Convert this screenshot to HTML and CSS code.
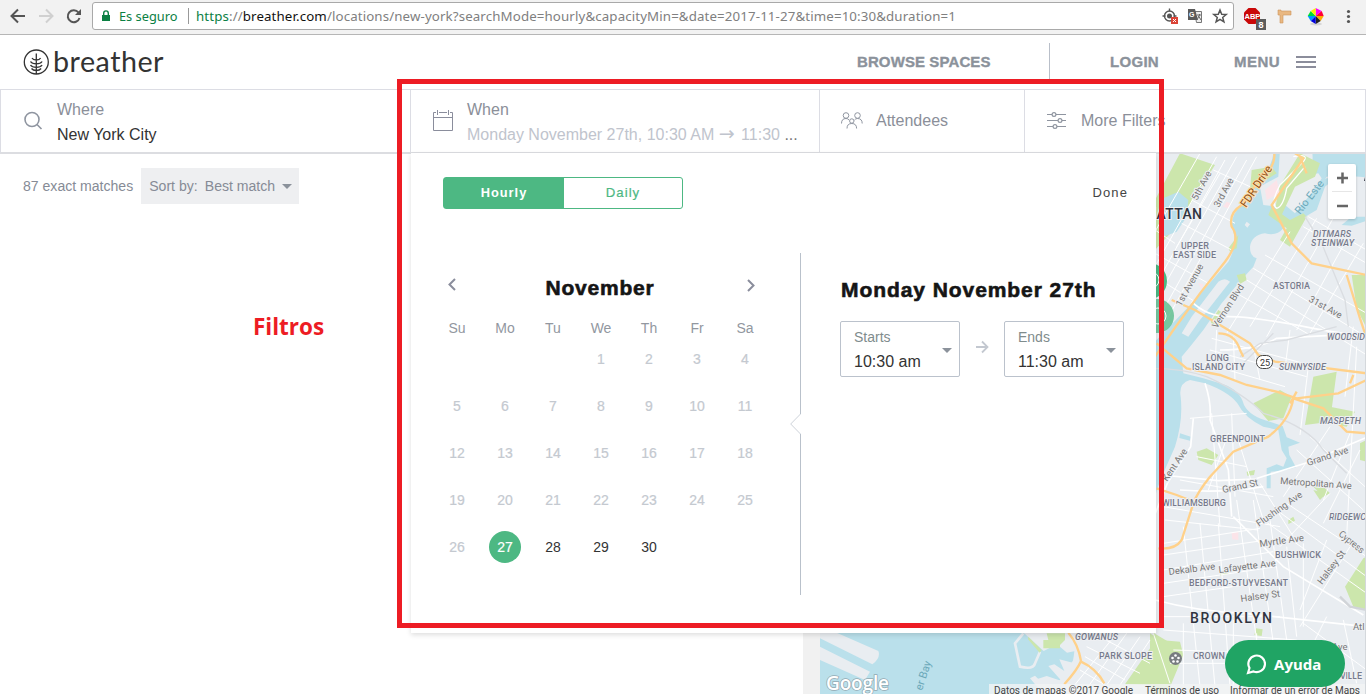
FILE: index.html
```
<!DOCTYPE html>
<html lang="en">
<head>
<meta charset="utf-8">
<title>Breather</title>
<link rel="stylesheet" href="styles.css">
</head>
<body>
<div class="browser">
  <svg class="nav" width="92" height="34" fill="none" stroke="#555" stroke-width="2">
    <path d="M25 16H12M18 9.500l-6.500 6.500 6.500 6.500"/>
    <path stroke="#d0d0d0" d="M39 16h13M46 9.500l6.500 6.500-6.500 6.500"/>
    <path d="M78.500 12.500a6 6 0 1 0 1 5.500"/><path fill="#555" stroke="none" d="M81 9v6h-6z"/>
  </svg>
  <div class="address">
    <svg width="10" height="12"><path fill="#0b8043" d="M1 5h8v6H1z"/><path fill="none" stroke="#0b8043" stroke-width="1.400" d="M2.700 5V3.200a2.300 2.300 0 0 1 4.600 0V5"/></svg>
    <span class="secure">Es seguro</span>
    <span class="url"><i>https</i>://<b>breather.com</b>/locations/new-york?searchMode=hourly&amp;capacityMin=&amp;date=2017-11-27&amp;time=10:30&amp;duration=1</span>
  </div>
  <svg class="exts" width="206" height="34">
    <g fill="none" stroke="#555" stroke-width="1.400"><circle cx="9.500" cy="16" r="5"/><path d="M9.500 8.500v3M2.500 16h3M13.500 16h3"/><circle cx="9.500" cy="16" r="1.800" fill="#555"/></g>
    <path fill="#db4437" d="M11 17h7v7h-7z"/><path stroke="#fff" d="M13 19l3 3m0-3l-3 3"/>
    <path fill="#eee" stroke="#777" d="M34.500 11.500h7v11h-5z"/><path fill="#5a5a5a" d="M28 9h7l3 11H28z"/><path fill="none" stroke="#666" d="M37 15h4M39.500 14v1l-2 4m1-3l2.500 4"/><text x="29" y="17" class="gt">G</text>
    <path fill="none" stroke="#555" stroke-width="1.500" d="M60 10l1.700 4.300 4.500.200-3.500 2.900 1.200 4.400-3.900-2.500-3.900 2.500 1.200-4.400-3.500-2.900 4.500-.200z"/>
    <path fill="#c90808" d="M88.500 8h7l4.500 4.500v7l-4.500 4.500h-7l-4.500-4.500v-7z"/><text x="84.500" y="19" class="abp">ABP</text>
    <path fill="#5c5c5c" d="M96 19h10v11H96z"/><text x="98.500" y="28" class="count">8</text>
    <path fill="#e9b882" stroke="#cf965b" stroke-width=".6" d="M118 10h3v1h10v4h-8v8h-3v-8h-2z"/>
    <ellipse cx="156" cy="24" rx="6" ry="1.500" fill="#d5d5d5"/>
    <g transform="translate(155.700 16)"><path fill="#f0f" d="M0 0V-8L6-5z"/><path fill="#f03" d="M0 0L6-5 8 0z"/><path fill="#fa0" d="M0 0H8L5 5z"/><path fill="#222" d="M0 0L5 5 0 8z"/><path fill="#00d" d="M0 0V8L-5 5z"/><path fill="#09f" d="M0 0L-5 5-8 0z"/><path fill="#0d3" d="M0 0H-8L-5-5z"/><path fill="#fe0" d="M0 0L-5-5 0-8z"/></g>
    <g fill="#555"><circle cx="188.500" cy="11.500" r="1.600"/><circle cx="188.500" cy="16.500" r="1.600"/><circle cx="188.500" cy="21.500" r="1.600"/></g>
  </svg>
</div>

<header class="header">
  <div class="logo">
    <svg width="27" height="27" fill="none" stroke="#333" stroke-width="1.300"><circle cx="13.300" cy="13" r="12"/><path d="M13.300 4.500v20.500M9 9q1 2 4.300 2 3.300 0 4.300-2M7.500 12.500q1.500 2.300 5.800 2.300t5.800-2.300M7.500 16q1.500 2.300 5.800 2.300t5.800-2.300M8.500 19.500q1.500 2 4.800 2t4.800-2"/></svg>
    <span>breather</span>
  </div>
  <nav class="menu"><a class="browse">BROWSE SPACES</a><a class="login">LOGIN</a><a class="more">MENU</a>
    <svg width="20" height="14" stroke="#8b8d9b" stroke-width="2"><path d="M0 2h20M0 7h20M0 12h20"/></svg></nav>
</header>

<section class="filters">
  <div class="cell where">
    <svg width="20" height="20" fill="none" stroke="#8f95a0" stroke-width="1.600"><circle cx="8" cy="8.500" r="7"/><path d="M13 13.500L17.500 18"/></svg>
    <div><p class="label">Where</p><p class="value">New York City</p></div>
  </div>
  <div class="cell when">
    <svg width="21" height="22" fill="none" stroke="#8a8d9c"><path d="M3 2.500H.5v18h19v-18H17M6 2.500h8M.5 7.500h19M4.500 0v5M15.500 0v5"/></svg>
    <div><p class="label">When</p><p class="picked">Monday November 27th, 10:30 AM <em>→</em> 11:30 <span>...</span></p></div>
  </div>
  <div class="cell people">
    <svg width="22" height="18" fill="none" stroke="#8f95a0"><circle cx="5" cy="3.500" r="2.800"/><circle cx="16.500" cy="3.500" r="2.800"/><circle cx="10.800" cy="9" r="2.200"/><path d="M.5 11.500q0-5 4.500-5 2 0 3 1.500M21.200 11.500q0-5-4.700-5-2 0-3 1.500M6 16.500q0-5 4.800-5t4.800 5"/></svg>
    <span class="label">Attendees</span>
  </div>
  <div class="cell extra">
    <svg width="20" height="18" fill="none" stroke="#8f95a0" stroke-width="1.200"><path d="M0 2.500h5M9 2.500h10M0 8.500h11M15 8.500h4M0 14.500h6M10 14.500h9"/><circle cx="7" cy="2.500" r="1.900"/><circle cx="13" cy="8.500" r="1.900"/><circle cx="8" cy="14.500" r="1.900"/></svg>
    <span class="label">More Filters</span>
  </div>
</section>

<main class="content">
  <section class="results"><div class="bar"><span>87 exact matches</span><div class="sort">Sort by:<span>Best match</span><i class="caret"></i></div></div><p class="note">Filtros</p></section>
  <div class="track"></div>
  <section class="map">
  <svg width="546" height="541" viewBox="820 153 546 541">
    <rect x="820" y="153" width="546" height="541" fill="#e9edf1"/>
    <g transform="translate(1150 150) scale(.33333)" fill="none">
      <!-- water -->
      <g fill="#bae0eb">
        <path d="M370 0Q372 40 335 80L275 165Q240 195 247 235 265 280 235 335L130 455 0 590V1130L20 1020 40 970 75 890Q100 810 92 740 85 700 120 690L165 700Q235 725 262 760 285 805 340 830L385 840 395 900 410 925 400 950 380 943 350 955 350 1015 362 1015 362 965 400 962 438 952 418 915 415 890 450 878 410 862 398 828 360 815Q300 800 282 765 270 720 220 703L160 685 100 670 95 620 120 590 160 540 215 460 265 400 310 350 320 325Q300 320 300 290 305 255 345 250 380 260 400 235L430 205 470 165 530 80 560 75 648 82V0H485Q500 60 440 110 400 150 385 170L340 165 330 110 385 80 390 0z"/>
        <path d="M375 160L440 215 500 180 525 110 560 80 500 90 430 190zM575 225l30-25h45v12l-45 15zM90 850l32 10-2 12-32-8z"/>
      </g>
      <path fill="#e9edf1" d="M205 395q20-15 35 0L150 510 115 560 95 550 125 500zM290 215l10 8-8 10-8-8z"/>
      <path fill="#ebeef1" d="M415 100l35-20 55-10 10 15-15 25-65 80-30-25-15-50z"/>
      <!-- parks -->
      <g fill="#cce6ac">
        <path d="M90 10L195 45 75 235 15 300V150zM305 60l60-10 15 20-80 50zM450 10l60 30-15 40-60 30-40 85-20-10 10-70z"/>
        <path d="M365 170l55 40 40-20 10 10-50 90-30-20 20-35-55-40zM235 295l30-40-5 40-20 10zM260 375l25-5 5 20-20 12zM205 480l15 10-30 40-8-15zM605 375h45v160l-30-60z"/>
        <path d="M310 760l80-40 35 20-25 65-45 8zM490 680l70-15-20 150-75 10zM540 770l75 15-25 45-55-10zM140 905l30-10 35 20-20 30-40-15zM290 965l25-5-3 15-20 2zM490 1010l20-10 30 30-20 10zM630 880l20-10v65l-20-5z"/>
        <path d="M640 1225l10-5v160l-40-10-25-60zM318 1435l20 3-3 20-22-3zM415 1110l15-10 5 12-20 10zM490 1020l40 10-20 20zM0 1450l30 20 60 5 10 40-50 120H0zM210 1265l15-5 15 10-30 7z"/>
      </g>
      <path fill="#bae0eb" d="M40 145l45-20 30 25-5 50-30 45-40 15z"/>
      <path fill="#fbe4e9" d="M345 120l35-30 10 40-40 20zM230 155l12 5-8 15-15-5zM245 1150l20-5v25l-18-2zM145 400l15 3-5 15z"/>
      <!-- street grids -->
      <g stroke="#fff" stroke-width="3">
        <path d="M150 10L15 245M200 20L15 350M225 30L20 400M260 20L30 430M290 30L40 480M320 20L50 510M15 240l60 40M95 220l150 80M125 150l130 70M190 60l110 50M15 310l160 90M15 380l120 75M210 70L80 290"/>
        <path d="M345 315L650 490M310 355l330 200M290 390l360 225M260 430l220 125M420 245L230 550M500 205L300 530M555 195L350 560M600 250L440 540M640 280L480 550M460 230l190 110M475 200l175 100"/>
        <path d="M200 540l-5 120M250 560l5 130M310 590l20 100M185 565l330 90M180 600l290 80M165 640l240 70M420 540l-15 115M475 650l-25 205M610 530l-25 210"/>
        <path d="M185 790l25 340M235 850l-60 170M245 790l10 250M120 805l170-15M140 920l150 30M90 990l280 50M265 870l75 240M620 590l-30 570M480 860l165 150M440 900l200 180M540 830L400 1040M600 850l-80 200M630 900L520 1120"/>
        <path d="M40 1070l350 60M45 1110l280 30M40 1180l290-45M40 1215l310-45M40 1260l330-55M40 1300l340-50M40 1340l380-55M100 1130l50 480M150 1120l45 490M205 1120l35 490M260 1050l60 420M310 1050l60 430M360 1110l50 360M410 1190l30 270"/>
        <path d="M40 1400h350M40 1440l400 30M70 1500l300 10M60 1540h200M100 1420v190M250 1410v200M320 1450v160M460 1180v250M530 1170l-80 210M600 1190L450 1430M410 1060l240 160M380 1080l270 200M340 1110l310 220M330 1000l100 160M540 1030L390 1190M460 1420l190 140M530 1400l-100 200M580 1410l40 190"/>
      </g>
      <g stroke="#fff" stroke-width="5"><path d="M125 455Q170 500 240 500t250 35 150 0M165 700q20 60 15 110l55 150 10 140M130 805l-8 85-70 110-40 100M35 975l170 17 110-5 160-50 175-75M250 1100l150 150 240 145M15 1350q130 35 270 40l365 40M90 1020q130 10 250-10M210 600q110 0 170-35l270-15"/><path d="M430 20q50-10 30 15L390 105q-30 55-10 70 20-5 30-60l55-65" stroke-width="4"/></g>
      <path stroke="#dadde1" stroke-width="4" d="M0 655q100 0 170 25 110 50 170 110 130 35 180 110l70 70M465 200l50 80 70 170 10 80M270 620l60-40 80-10 150-40M370 550l-90 90"/>
      <path stroke="#d1d4d8" stroke-width="7" d="M570 1340l30 30 50 10"/>
      <g stroke="#ffd18a" stroke-width="7">
        <path d="M372 0Q380 50 335 80L275 165Q235 190 245 230 275 270 225 335L150 430 70 540 15 620"/>
        <path d="M65 450l70 30 100 60 65 40 25 35 50 20 275 35M435 10l25 15-95 140 60 115 60 60 165 35M590 375l40 130 20 60"/>
        <path d="M20 580l90 75 100 20 80 30 90 20 60 20 125-15 85-40M430 745l90 30 70 70 60 5M430 745q-10 65-75 115L250 905 180 980q-40 50-50 80l-35 110q-20 30-70 25M20 1015l60 20 50 20"/>
        <path d="M205 550q50 0 65 50l10 20M600 700l10-25M440 725l-20 35M450 20l20 50"/>
      </g>
    </g>
    <g transform="translate(790 600) scale(.33333)">
      <path fill="#bae0eb" d="M90 90h770l-10 90-40 60-80 45H90z"/>
      <path fill="#e9edf1" d="M90 98h50l125 55q8 20-18 40L90 115zM90 140l150 75-15 25-135-60zM700 98h200v190H790l-50-50 30-10 45 15-40-45 18-5 30 20-15-35 40 10 8-35-25 5-30-25-40 20-55-50zM720 235l15-8 55 55h-30z"/>
      <path fill="none" stroke="#e9edf1" stroke-width="8" d="M700 100l-25 30 15 70q40 10 45-10l15-35"/>
      <path fill="#cce6ac" d="M770 100h55v20l-15 15v10h-50v-25h15zM1090 98l50 30v130l-135-5 80-115zM715 110l40 40-6 8-35-40z"/>
      <g fill="none" stroke="#fff" stroke-width="3"><path d="M1010 100L880 280M1050 110L930 285M980 100L850 260M1080 120L970 285M910 100l170 90M890 140l160 80M885 170l120 70M870 210l100 60M1090 100l50 150"/></g>
      <path fill="none" stroke="#ffd18a" stroke-width="7" d="M835 98q30 35 38 85-10 25-50 70M873 185q45 20 70 65"/>
    </g>
    <g fill="#4db883"><circle cx="1149" cy="281" r="18"/><circle cx="1157" cy="316" r="17" opacity=".75"/></g>
    <g fill="none" stroke="#fff"><circle cx="1151" cy="280" r="8"/><circle cx="1158" cy="316" r="8"/></g>
    <g class="names">
      <text class="city" x="1146" y="219" textLength="56">HATTAN</text><text class="city" x="1190" y="623" textLength="82">BROOKLYN</text>
      <text x="1181" y="249" textLength="28">UPPER</text><text x="1173" y="258" textLength="43">EAST SIDE</text><text x="1273" y="289" textLength="37">ASTORIA</text>
      <text x="1206" y="361" textLength="23">LONG</text><text x="1192" y="370" textLength="53">ISLAND CITY</text><text x="1210" y="442" textLength="55">GREENPOINT</text>
      <text x="1162" y="506" textLength="64">WILLIAMSBURG</text><text x="1275" y="558" textLength="46">BUSHWICK</text><text x="1189" y="586" textLength="99">BEDFORD-STUYVESANT</text>
      <text x="1099" y="659" textLength="53">PARK SLOPE</text><text x="1193" y="659" textLength="32">CROWN</text><text x="1340" y="679" textLength="22">VILLE</text>
      <g font-style="italic"><text x="1313" y="237" textLength="38">DITMARS</text><text x="1311" y="246" textLength="43">STEINWAY</text><text x="1327" y="340" textLength="38">WOODSID</text><text x="1279" y="370" textLength="47">SUNNYSIDE</text><text x="1320" y="424" textLength="41">MASPETH</text><text x="1329" y="520" textLength="37">RIDGEWC</text><text x="1075" y="640" textLength="43">GOWANUS</text></g>
    </g>
    <g class="roads">
      <text transform="translate(1197 201) rotate(-62)">5th Ave</text><text transform="translate(1219 208) rotate(-62)">3rd Ave</text><text class="fdr" transform="translate(1246 208) rotate(-56)">FDR Drive</text>
      <text transform="translate(1181 307) rotate(-61)">1st Avenue</text><text transform="translate(1217 329) rotate(-57)">Vernon Blvd</text><text transform="translate(1308 301) rotate(29)">31st Ave</text>
      <text transform="translate(1167 482) rotate(-56)">Kent Ave</text><text transform="translate(1308 466) rotate(-18)">Grand Ave</text><text transform="translate(1280 484) rotate(4)">Metropolitan Ave</text><text transform="translate(1223 493) rotate(-12)">Grand St</text>
      <text transform="translate(1259 527) rotate(-35)">Flushing Ave</text><text transform="translate(1260 547) rotate(-8)">Myrtle Ave</text><text transform="translate(1169 575) rotate(-7)">Dekalb Ave</text><text transform="translate(1219 573) rotate(-7)">Lafayette Ave</text>
      <text transform="translate(1241 602) rotate(-8)">Halsey St</text><text transform="translate(1322 585) rotate(-53)">Halsey St</text><text transform="translate(1338 535) rotate(39)" textLength="30">Cypress</text><text x="1353" y="630">Atl</text><text x="1332" y="650">Ave</text>
      <g class="bay"><text transform="translate(1300 215) rotate(-52)">Río Este</text><text transform="translate(922 691) rotate(-72)">er Bay</text></g>
    </g>
    <rect x="1256.500" y="355.500" width="16" height="13" rx="6" fill="#fff" stroke="#444"/><text class="shield" x="1260" y="365.500">25</text>
    <circle cx="1175.500" cy="658.500" r="6.500" fill="#777b80"/><g fill="#fff"><circle cx="1175.500" cy="655.500" r="1.300"/><circle cx="1172.500" cy="658" r="1.300"/><circle cx="1178.500" cy="658" r="1.300"/><circle cx="1173.500" cy="661.500" r="1.300"/><circle cx="1177.500" cy="661.500" r="1.300"/></g>
    <path fill="#303440" d="M1366 173v8h-2z"/>
    <rect x="989" y="684" width="377" height="11" fill="#f3f4f5" opacity=".8"/>
    <g class="legal"><text x="994" y="693.500" textLength="139">Datos de mapas ©2017 Google</text><text x="1145" y="693.500" textLength="74">Términos de uso</text><text x="1230" y="693.500" textLength="130">Informar de un error de Maps</text></g>
    <text class="google" x="826" y="690" textLength="63">Google</text>
    <path stroke="#d4d8dc" d="M1365.500 153v541"/>
  </svg>
  <div class="zoomer"><svg width="28" height="55" stroke="#666" stroke-width="2.500"><path d="M9 14h11M14.500 8.500v11M9 42h11"/><path stroke="#e6e6e6" stroke-width="1" d="M4 27.500h20"/></svg></div>
  <div class="help"><svg width="20" height="22" fill="none" stroke="#fff" stroke-width="2.200"><path d="M2 20l1.500-5A8.300 8.300 0 1 1 7.500 18.500L2 20z"/></svg>Ayuda</div>
  </section>
</main>

<section class="panel">
  <div class="top"><div class="toggle"><b>Hourly</b><span>Daily</span></div><span class="done">Done</span></div>
  <div class="cols">
    <div class="calendar">
      <div class="month"><svg class="prev" width="10" height="14" fill="none" stroke="#8a8d9c" stroke-width="2"><path d="M8 1L2.500 6.500 8 12"/></svg><h2>November</h2><svg class="next" width="10" height="14" fill="none" stroke="#8a8d9c" stroke-width="2"><path d="M2 1l5.500 5.500L2 12"/></svg></div>
      <div class="week"><span>Su</span><span>Mo</span><span>Tu</span><span>We</span><span>Th</span><span>Fr</span><span>Sa</span></div>
      <div class="days"><i></i><i></i><i></i><span>1</span><span>2</span><span>3</span><span>4</span><span>5</span><span>6</span><span>7</span><span>8</span><span>9</span><span>10</span><span>11</span><span>12</span><span>13</span><span>14</span><span>15</span><span>16</span><span>17</span><span>18</span><span>19</span><span>20</span><span>21</span><span>22</span><span>23</span><span>24</span><span>25</span><span>26</span><span class="sel">27</span><span class="open">28</span><span class="open">29</span><span class="open">30</span></div>
    </div>
    <svg class="divider" width="12" height="343" fill="none"><path stroke="#b9c1cb" d="M10.500 0v161M10.500 181v161"/><path stroke="#cdd2d9" d="M10.500 161L.700 171l9.800 10"/></svg>
    <div class="times">
      <h2>Monday November 27th</h2>
      <div class="pickers"><div class="picker"><div><small>Starts</small><p>10:30 am</p></div><i class="caret"></i></div>
      <svg class="to" width="14" height="14" fill="none" stroke="#c3c8d0" stroke-width="1.800"><path d="M1 7h11M7 1.500L12.500 7 7 12.500"/></svg>
      <div class="picker"><div><small>Ends</small><p>11:30 am</p></div><i class="caret"></i></div></div>
    </div>
  </div>
</section>
<div class="highlight"></div>
</body>
</html>
```

FILE: styles.css
```
* { box-sizing: border-box; }
body { margin: 0; width: 1366px; height: 694px; overflow: hidden; position: relative; background: #fff; font-family: "Liberation Sans", Arial, sans-serif; color: #333; }
p, h2 { margin: 0; }
svg { flex: none; display: block; }
.browser { display: flex; height: 35px; background: #f2f2f2; border-bottom: 1px solid #b6b6b6; }
.address { width: 1142px; height: 28px; margin-top: 2px; border: 1px solid #a9a9a9; border-radius: 3px; background: #fff; display: flex; align-items: center; padding-left: 8px; font: 14px "Noto Sans", sans-serif; white-space: nowrap; }
.secure { color: #0b8043; margin-left: 8px; border-right: 1px solid #999; line-height: 16px; width: 70px; font-size: 12.800px; }
.url { color: #808080; margin-left: 7px; font-size: 13.300px; letter-spacing: .118px; }
.url i { font-style: normal; color: #0b8043; }
.url b { font-weight: 400; color: #111; }
.exts { margin-left: -74px; }
.gt { font: bold 7px "Liberation Sans", sans-serif; fill: #fff; }
.abp { font: bold 7.500px "Liberation Sans", sans-serif; fill: #fff; }
.count { font: bold 9px "Liberation Sans", sans-serif; fill: #fff; }
.header { height: 54px; display: flex; justify-content: space-between; padding: 0 50px 0 23px; }
.logo { display: flex; align-items: center; gap: 3px; font: 28.700px Lato, sans-serif; color: #333; }
.logo span { letter-spacing: .5px; line-height: 50px; margin-top: -3px; }
.menu { display: flex; align-items: center; font: bold 15px "Liberation Sans", sans-serif; color: #8b929b; -webkit-text-stroke: .35px #8b929b; }
.menu a { line-height: 38px; height: 38px; }
.browse { width: 193px; border-right: 1px solid #b9bfc9; letter-spacing: .1px; }
.login { width: 110px; padding-left: 60px; margin-right: 74px; letter-spacing: .3px; }
.more { width: 47px; margin-right: 15px; letter-spacing: .5px; }
.filters { display: flex; height: 65px; border: 1px solid #dcdde4; border-bottom: 2px solid #dcdde1; position: relative; z-index: 1; }
.cell { display: flex; align-items: center; border-right: 1px solid #dcdde4; }
.cell:last-child { border: 0; }
.where { width: 410px; padding-left: 23px; gap: 13px; }
.when { width: 409px; padding-left: 22px; gap: 13px; }
.where div, .when div { padding-top: 2px; }
.people { width: 205px; padding-left: 21px; gap: 13px; }
.extra { padding-left: 22px; gap: 14px; }
.label { font-size: 16px; line-height: 20px; color: #8b8f99; white-space: nowrap; }
.value { font-size: 16px; line-height: 20px; margin-top: 5px; }
.picked { font-size: 16px; line-height: 20px; margin-top: 5px; color: #c0c4cd; white-space: nowrap; }
.picked em { font: 19px/16px "DejaVu Sans", sans-serif; margin-right: 2px; }
.picked span { color: #777; }
.content { display: flex; height: 540px; }
.results { width: 803px; padding: 14px 0 0 23px; }
.bar { display: flex; align-items: center; gap: 8px; font-size: 14.070px; color: #868b96; }
.sort { width: 158px; height: 36px; background: #eeeff1; padding: 0 7px 0 8px; display: flex; align-items: center; justify-content: space-between; }
.caret { border: 5px solid transparent; border-top-color: #8b929b; border-bottom: 0; }
.note { font: bold 22.500px "Open Sans", sans-serif; color: #ed1c24; margin: 107px 0 0 230px; }
.track { width: 17px; background: #f1f1f1; }
.map { width: 546px; position: relative; top: -1px; }
.names { font: 500 9px Roboto, sans-serif; fill: #777b8c; stroke: #eef0f3; stroke-width: 2px; paint-order: stroke; }
.city { font-size: 14px; fill: #303440; }
.roads { font: 9.500px Roboto, sans-serif; fill: #777; stroke: #eef0f3; stroke-width: 2px; paint-order: stroke; }
.fdr { fill: #8a4b10; stroke: #ffdca8; font-size: 11px; }
.bay { fill: #6ba8b9; stroke: none; font-size: 11px; }
.shield { font: 9px Roboto, sans-serif; fill: #333; }
.legal { font: 10px Roboto, sans-serif; fill: #444; }
.google { font: 600 19px "Open Sans", sans-serif; fill: #fff; stroke: #93a9b2; stroke-width: 1.500px; paint-order: stroke; }
.zoomer { position: absolute; left: 508px; top: 11px; height: 55px; background: #fff; border-radius: 2px; box-shadow: 0 1px 3px #0003; }
.help { position: absolute; left: 405px; top: 487px; width: 120px; height: 47px; border-radius: 24px; background: #20a464; color: #fff; display: flex; align-items: center; gap: 8px; padding-left: 21px; font: bold 15px "Noto Sans", sans-serif; }
.panel { position: absolute; z-index: 2; left: 411px; top: 153px; width: 745px; height: 480px; background: #fff; box-shadow: 0 2px 5px #0002; padding: 24px 28px 0 32px; }
.top { display: flex; justify-content: space-between; align-items: center; }
.toggle { display: flex; width: 240px; height: 32px; border: 1px solid #4db883; border-radius: 3px; font-size: 13.200px; line-height: 30px; letter-spacing: 1px; text-align: center; color: #4db883; -webkit-text-stroke: .2px #4db883; }
.toggle b { width: 120px; background: #4db883; color: #fff; font-size: 12.800px; -webkit-text-stroke: 0; }
.toggle span { width: 118px; }
.done { font-size: 13px; letter-spacing: 1.100px; color: #444; margin-top: -2px; }
.cols { display: flex; margin-top: 44px; }
.calendar { flex: none; width: 347px; padding-top: 22px; }
.month { display: flex; justify-content: space-between; align-items: center; width: 313px; padding-left: 4px; height: 26px; }
.prev { margin-top: -6px; }
.next { margin-top: -4px; }
h2 { font: 900 21px "Liberation Sans", sans-serif; color: #151515; letter-spacing: .8px; -webkit-text-stroke: .6px #151515; }
.month h2 { margin-right: 3px; }
.week, .days { display: grid; grid-template-columns: repeat(7, 48px); margin-left: -10px; text-align: center; font-size: 14px; color: #92979f; }
.week { margin-top: 17px; line-height: 20px; }
.days { grid-auto-rows: 47px; color: #c4c9d0; line-height: 32px; margin-top: 5px; -webkit-text-stroke: .2px; }
.days .open { color: #333; -webkit-text-stroke: 0; }
.days .sel { width: 32px; height: 32px; margin-left: 8px; border-radius: 50%; background: #4db883; color: #fff; }
.times { flex: none; padding: 25px 0 0 38px; width: 326px; }
.times h2 { line-height: 24px; white-space: nowrap; letter-spacing: .93px; margin-left: 1px; }
.pickers { display: flex; align-items: center; gap: 15px; margin-top: 19px; }
.picker { flex: none; width: 120px; height: 56px; border: 1px solid #bbc2cc; border-radius: 2px; display: flex; align-items: center; justify-content: space-between; padding: 0 7px 0 13px; }
.picker .caret { margin-top: 2px; }
.to { margin-top: -4px; }
.picker small { display: block; font-size: 14px; line-height: 20px; color: #7f8c8d; }
.picker p { font-size: 16px; line-height: 20px; margin: 5px 0 -1px; }
.highlight { position: absolute; z-index: 3; left: 397px; top: 79px; width: 767px; height: 549px; border: 5px solid #ed1c24; }
```
